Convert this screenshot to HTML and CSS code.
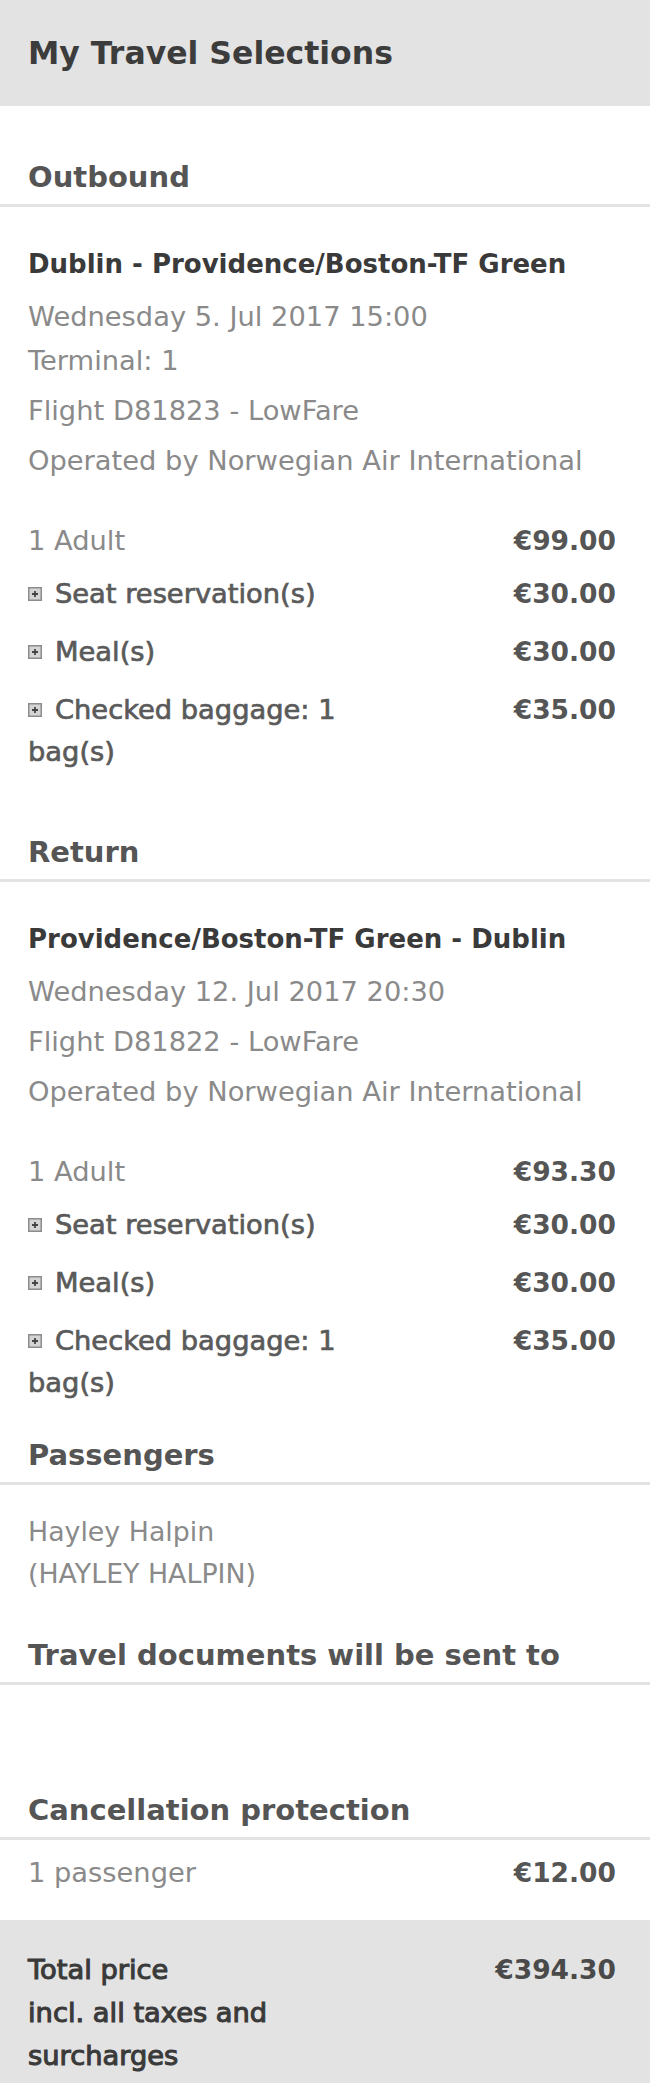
FILE: index.html
```html
<!DOCTYPE html>
<html lang="en">
<head>
<meta charset="utf-8">
<title>My Travel Selections</title>
<link rel="stylesheet" href="styles.css">
</head>
<body>
<header class="page-head">
  <h1 class="page-title">My Travel Selections</h1>
</header>

<section class="block leg-out">
  <h2 class="sec-title">Outbound</h2>
  <div class="leg-body">
    <p class="route">Dublin - Providence/Boston-TF Green</p>
    <p class="detail first">Wednesday 5. Jul 2017 15:00<br>Terminal: 1</p>
    <p class="detail">Flight D81823 - LowFare</p>
    <p class="detail">Operated by Norwegian Air International</p>
    <ul class="prices">
      <li class="row base"><span class="label plain">1 Adult</span><span class="amount">€99.00</span></li>
      <li class="row"><span class="label"><svg class="plus" viewBox="0 0 14 14" width="14" height="14"><rect x="0.75" y="0.75" width="12.5" height="12.5" fill="#d4d4d4" stroke="#8c8c8c" stroke-width="1.5"/><path d="M4 7h6M7 4v6" stroke="#444" stroke-width="1.8"/></svg>Seat reservation(s)</span><span class="amount">€30.00</span></li>
      <li class="row"><span class="label"><svg class="plus" viewBox="0 0 14 14" width="14" height="14"><rect x="0.75" y="0.75" width="12.5" height="12.5" fill="#d4d4d4" stroke="#8c8c8c" stroke-width="1.5"/><path d="M4 7h6M7 4v6" stroke="#444" stroke-width="1.8"/></svg>Meal(s)</span><span class="amount">€30.00</span></li>
      <li class="row"><span class="label"><svg class="plus" viewBox="0 0 14 14" width="14" height="14"><rect x="0.75" y="0.75" width="12.5" height="12.5" fill="#d4d4d4" stroke="#8c8c8c" stroke-width="1.5"/><path d="M4 7h6M7 4v6" stroke="#444" stroke-width="1.8"/></svg>Checked baggage: 1 bag(s)</span><span class="amount">€35.00</span></li>
    </ul>
  </div>
</section>

<section class="block leg-ret">
  <h2 class="sec-title">Return</h2>
  <div class="leg-body">
    <p class="route">Providence/Boston-TF Green - Dublin</p>
    <p class="detail first">Wednesday 12. Jul 2017 20:30</p>
    <p class="detail">Flight D81822 - LowFare</p>
    <p class="detail">Operated by Norwegian Air International</p>
    <ul class="prices">
      <li class="row base"><span class="label plain">1 Adult</span><span class="amount">€93.30</span></li>
      <li class="row"><span class="label"><svg class="plus" viewBox="0 0 14 14" width="14" height="14"><rect x="0.75" y="0.75" width="12.5" height="12.5" fill="#d4d4d4" stroke="#8c8c8c" stroke-width="1.5"/><path d="M4 7h6M7 4v6" stroke="#444" stroke-width="1.8"/></svg>Seat reservation(s)</span><span class="amount">€30.00</span></li>
      <li class="row"><span class="label"><svg class="plus" viewBox="0 0 14 14" width="14" height="14"><rect x="0.75" y="0.75" width="12.5" height="12.5" fill="#d4d4d4" stroke="#8c8c8c" stroke-width="1.5"/><path d="M4 7h6M7 4v6" stroke="#444" stroke-width="1.8"/></svg>Meal(s)</span><span class="amount">€30.00</span></li>
      <li class="row"><span class="label"><svg class="plus" viewBox="0 0 14 14" width="14" height="14"><rect x="0.75" y="0.75" width="12.5" height="12.5" fill="#d4d4d4" stroke="#8c8c8c" stroke-width="1.5"/><path d="M4 7h6M7 4v6" stroke="#444" stroke-width="1.8"/></svg>Checked baggage: 1 bag(s)</span><span class="amount">€35.00</span></li>
    </ul>
  </div>
</section>

<section class="block passengers">
  <h2 class="sec-title">Passengers</h2>
  <p class="pax">Hayley Halpin<br>(HAYLEY HALPIN)</p>
</section>

<section class="block docs">
  <h2 class="sec-title">Travel documents will be sent to</h2>
</section>

<section class="block cancel">
  <h2 class="sec-title">Cancellation protection</h2>
  <div class="row single"><span class="label plain">1 passenger</span><span class="amount">€12.00</span></div>
</section>

<footer class="total">
  <div class="row">
    <span class="label total-label"><span class="total-main">Total price</span>incl. all taxes and surcharges</span>
    <span class="amount">€394.30</span>
  </div>
</footer>
</body>
</html>
```

FILE: styles.css
```css
* { box-sizing: border-box; }

html, body {
  margin: 0;
  padding: 0;
  background: #ffffff;
}

body {
  font-family: "DejaVu Sans", sans-serif;
  color: #444;
}

.page-head {
  height: 106px;
  background: #e3e3e3;
  padding: 0 34px 0 28px;
  display: flex;
  align-items: center;
}

.page-title {
  margin: 0;
  font-size: 31.5px;
  font-weight: 700;
  line-height: 40px;
  color: #3c3c3c;
}

.sec-title {
  margin: 0;
  padding: 0 34px 7px 28px;
  font-size: 29px;
  font-weight: 700;
  line-height: 40px;
  color: #555;
  border-bottom: 3px solid #e3e3e3;
}

.leg-out { padding-top: 51px; }
.leg-ret { padding-top: 59px; }
.passengers { padding-top: 31px; }
.docs { padding-top: 40px; }
.cancel { padding-top: 105px; }

.leg-body {
  padding: 37px 34px 0 28px;
}

.leg-body p { margin: 0; }

.route {
  font-size: 26px;
  font-weight: 700;
  line-height: 40px;
  color: #3a3a3a;
}

.detail {
  font-size: 27.3px;
  line-height: 44px;
  color: #8a8a8a;
  margin-top: 6px !important;
}

.detail.first { margin-top: 11px !important; }

.prices {
  list-style: none;
  margin: 37px 0 0;
  padding: 0;
  display: flex;
  flex-direction: column;
  gap: 16px;
}

.row {
  display: grid;
  grid-template-columns: 55% 1fr;
  align-items: start;
}

.row.base { margin-bottom: -5px; }

.label {
  font-size: 27.3px;
  line-height: 42px;
  color: #5a5a5a;
  -webkit-text-stroke: 0.7px currentColor;
}

.label.plain {
  color: #8a8a8a;
  -webkit-text-stroke: 0;
}

.plus {
  display: inline-block;
  width: 14px;
  height: 14px;
  margin-right: 13px;
  vertical-align: 2px;
}

.amount {
  font-size: 26.5px;
  font-weight: 700;
  line-height: 42px;
  color: #555;
  text-align: right;
}

.pax {
  margin: 26px 0 0;
  padding: 0 34px 0 28px;
  font-size: 26.8px;
  line-height: 42px;
  color: #8a8a8a;
}

.single {
  margin-top: 12px;
  padding: 0 34px 0 28px;
}

.total {
  margin-top: 26px;
  background: #e3e3e3;
  padding: 28px 34px 6px 28px;
}

.total .label,
.total .amount {
  line-height: 43px;
}

.total-label {
  color: #3a3a3a;
  -webkit-text-stroke: 1.1px currentColor;
}

.total-main { display: block; }

.total .amount { color: #4a4a4a; }
```
